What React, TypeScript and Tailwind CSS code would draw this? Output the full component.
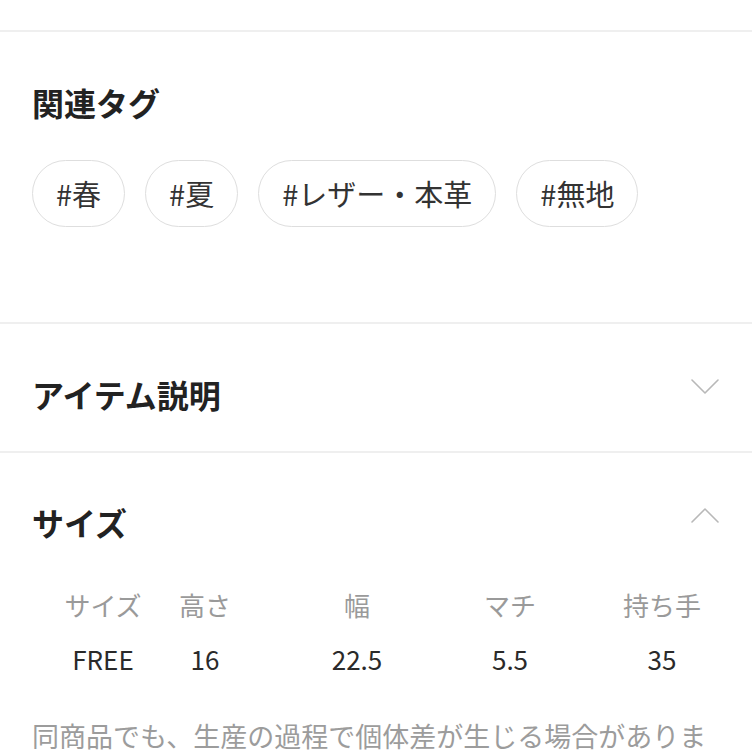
import React from "react";

const font = { fontFamily: '"Noto Sans CJK JP", "Noto Sans", sans-serif' };

function Chevron({ up }: { up?: boolean }) {
  return (
    <svg width="28" height="16" viewBox="0 0 28 16" fill="none">
      <path
        d={up ? "M1 15 L14 2 L27 15" : "M1 1 L14 14 L27 1"}
        stroke="#b8b8b8"
        strokeWidth="1.6"
        strokeLinecap="round"
        strokeLinejoin="round"
      />
    </svg>
  );
}

const tags = ["#春", "#夏", "#レザー・本革", "#無地"];
const headers = ["サイズ", "高さ", "幅", "マチ", "持ち手"];
const values = ["FREE", "16", "22.5", "5.5", "35"];

export default function App() {
  return (
    <div className="w-[752px] h-[752px] overflow-hidden bg-white" style={font}>
      <div className="h-[30px]" />
      <div className="h-[2px] bg-[#efefef]" />

      <section className="px-[32px] pt-[50px] pb-[95px]">
        <h2 className="text-[32px] leading-[40px] font-bold text-[#222]">関連タグ</h2>
        <div className="mt-[38px] flex gap-[20px]">
          {tags.map((t) => (
            <div
              key={t}
              className="h-[67px] px-[23px] flex items-center rounded-full border-[1.5px] border-[#dedede] text-[29px] text-[#333]"
            >
              {t}
            </div>
          ))}
        </div>
      </section>

      <div className="h-[2px] bg-[#efefef]" />

      <section className="pl-[32px] pr-[33px] pt-[50px] pb-[37px] flex justify-between items-start">
        <h2 className="text-[32px] leading-[40px] font-bold text-[#222]">アイテム説明</h2>
        <div className="mt-[5px]">
          <Chevron />
        </div>
      </section>

      <div className="h-[2px] bg-[#efefef]" />

      <section className="pl-[32px] pr-[33px] pt-[49px] flex justify-between items-start">
        <h2 className="text-[32px] leading-[40px] font-bold text-[#222]">サイズ</h2>
        <div className="mt-[5px]">
          <Chevron up />
        </div>
      </section>

      <div className="mt-[36px] ml-[52px] grid grid-cols-[102px_102px_202px_104px_200px] text-[26px] leading-[54px] text-center">
        {headers.map((h) => (
          <div key={h} className="text-[#9a9a9a]">
            {h}
          </div>
        ))}
        {values.map((v, i) => (
          <div key={i} className="text-[#2a2a2a]">
            {v}
          </div>
        ))}
      </div>

      <p className="mt-[30px] px-[32px] text-[27px] leading-[40px] text-[#9c9c9c]">
        同商品でも、生産の過程で個体差が生じる場合があります。
      </p>
    </div>
  );
}
